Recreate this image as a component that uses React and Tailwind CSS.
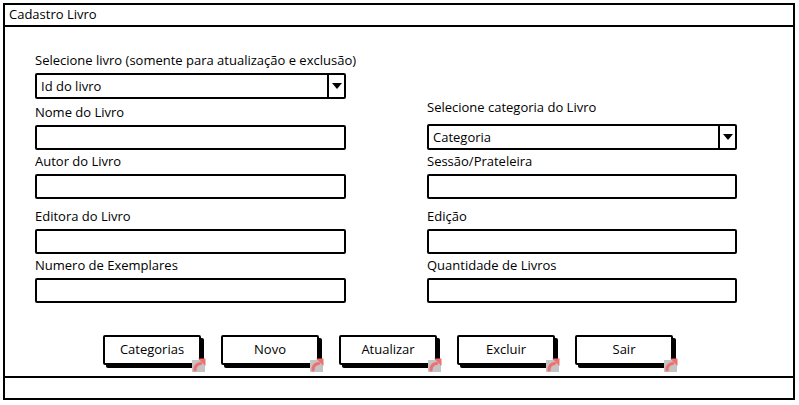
import React from "react";

const font = { fontFamily: '"Open Sans", "Noto Sans", sans-serif' };

function Label({ children, className = "" }) {
  return <div className={`h-[16px] leading-[16px] text-[13px] text-black ${className}`}>{children}</div>;
}

function Input({ className = "" }) {
  return <div className={`h-[25px] border-2 border-black rounded-[2px] bg-white ${className}`} />;
}

function Select({ text, className = "" }) {
  return (
    <div className={`h-[26px] border-2 border-black rounded-[2px] bg-white flex ${className}`}>
      <div className="flex-1 pl-[4px] text-[13px] leading-[22px]">{text}</div>
      <div className="w-[17px] border-l-2 border-black flex items-center justify-center">
        <svg width="10" height="6" viewBox="0 0 10 6">
          <path d="M0 0 L10 0 L5 6 Z" fill="#000" />
        </svg>
      </div>
    </div>
  );
}

function Button({ children }) {
  return (
    <div className="relative w-[98px] h-[30px]">
      <div className="absolute left-[3px] top-[3px] w-[98px] h-[30px] bg-black rounded-[2px]" />
      <div className="absolute inset-0 border-2 border-black bg-white rounded-[2px] flex items-center justify-center text-[13px]">
        {children}
      </div>
      <svg className="absolute right-[-6px] bottom-[-7px]" width="15" height="16" viewBox="0 0 15 16">
        <rect x="0" y="4" width="13" height="12" fill="#c4c4c4" />
        <path d="M3 14 C3 10 5 8 8.5 7.5" stroke="#ee7070" strokeWidth="3.2" fill="none" strokeLinecap="round" />
        <path d="M6 2.5 L13.5 2.5 L13.5 10 Z" fill="#ee7070" />
      </svg>
    </div>
  );
}

export default function App() {
  return (
    <div className="w-[799px] h-[405px] bg-white pl-[3px] pt-[3px] text-black" style={font}>
      <div className="w-[792px] h-[397px] border-2 border-black flex flex-col">
        <div className="h-[22px] border-b-2 border-black flex items-center pl-[4px] text-[13px]">Cadastro Livro</div>
        <div className="flex-1 flex flex-col pl-[30px]">
          <Label className="mt-[25px]">Selecione livro (somente para atualização e exclusão)</Label>
          <Select text="Id do livro" className="mt-[5px] w-[311px]" />
          <div className="flex gap-[81px]">
            <div className="w-[311px] flex flex-col">
              <Label className="mt-[5px]">Nome do Livro</Label>
              <Input className="mt-[5px]" />
              <Label className="mt-[3px]">Autor do Livro</Label>
              <Input className="mt-[5px]" />
              <Label className="mt-[9px]">Editora do Livro</Label>
              <Input className="mt-[5px]" />
              <Label className="mt-[3px]">Numero de Exemplares</Label>
              <Input className="mt-[5px]" />
            </div>
            <div className="w-[310px] flex flex-col">
              <Label className="mt-0">Selecione categoria do Livro</Label>
              <Select text="Categoria" className="mt-[9px]" />
              <Label className="mt-[3px]">Sessão/Prateleira</Label>
              <Input className="mt-[5px]" />
              <Label className="mt-[9px]">Edição</Label>
              <Input className="mt-[5px]" />
              <Label className="mt-[3px]">Quantidade de Livros</Label>
              <Input className="mt-[5px]" />
            </div>
          </div>
          <div className="flex mt-[32px] pl-[68px] gap-[20px]">
            <Button>Categorias</Button>
            <Button>Novo</Button>
            <Button>Atualizar</Button>
            <Button>Excluir</Button>
            <Button>Sair</Button>
          </div>
        </div>
        <div className="h-[22px] border-t-2 border-black" />
      </div>
    </div>
  );
}
